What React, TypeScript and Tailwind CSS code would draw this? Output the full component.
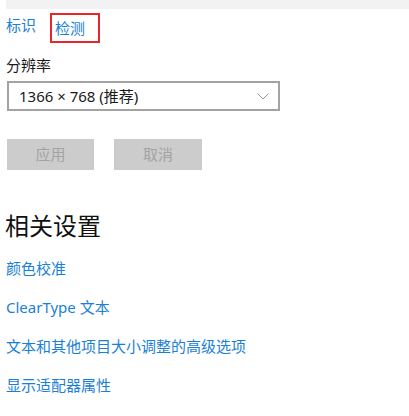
const FONT = "font-['Segoe_UI','Noto_Sans','Noto_Sans_CJK_SC',sans-serif]";

const LINKS = ["颜色校准", "ClearType 文本", "文本和其他项目大小调整的高级选项", "显示适配器属性"];

export default function App() {
  return (
    <div className={`${FONT} h-[416px] w-[409px] overflow-hidden bg-white text-black`}>
      <div className="ml-[6px] h-[9px] bg-[#f2f2f2]" />

      <div className="mt-[4px] flex items-start">
        <span className="ml-[6px] mt-[2px] text-[15px] leading-[20px] text-[#1a7fd6]">标识</span>
        <div className="ml-[14px] h-[30px] w-[50px] border-2 border-[#e8262b] pl-[3px] pt-[1px]">
          <span className="text-[15px] leading-[20px] text-[#1a7fd6]">检测</span>
        </div>
      </div>

      <div className="ml-[6px] mt-[12px] text-[15px] leading-[20px] text-[#1a1a1a]">分辨率</div>

      <div className="ml-[7px] mt-[6px] flex h-[30px] w-[273px] items-center justify-between border-2 border-[#a3a3a3] pl-[10px] pr-[9px]">
        <span className="text-[15px] leading-[20px] text-[#1a1a1a]">1366 × 768 (推荐)</span>
        <svg width="12" height="7" viewBox="0 0 12 7" fill="none" stroke="#9a9a9a" strokeWidth="1">
          <path d="M0.5 0.5 L6 6 L11.5 0.5" />
        </svg>
      </div>

      <div className="ml-[7px] mt-[28px] flex gap-[20px]">
        <button className="h-[31px] w-[87px] bg-[#cccccc] text-[15px] text-[#a3a3a3]">应用</button>
        <button className="h-[31px] w-[88px] bg-[#cccccc] text-[15px] text-[#a3a3a3]">取消</button>
      </div>

      <h2 className="ml-[5px] mt-[40px] text-[24px] leading-[32px] text-[#111]">相关设置</h2>

      <div className="mt-[16px] ml-[6px] flex flex-col gap-[19px]">
        {LINKS.map((label) => (
          <a key={label} className="text-[15px] leading-[20px] text-[#1a7fd6]">
            {label}
          </a>
        ))}
      </div>
    </div>
  );
}
